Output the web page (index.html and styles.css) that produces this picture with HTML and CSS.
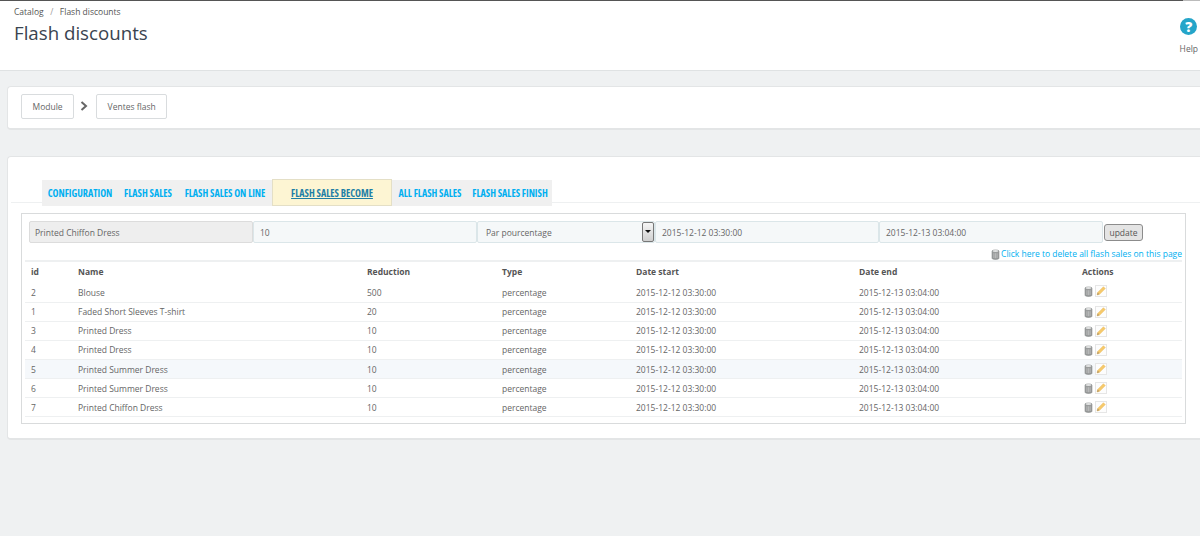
FILE: index.html
```html
<!DOCTYPE html>
<html lang="en">
<head>
<meta charset="utf-8">
<title>Flash discounts</title>
<link rel="stylesheet" href="styles.css">
</head>
<body>
<svg class="defs" width="0" height="0" aria-hidden="true">
  <symbol id="trash" viewBox="0 0 9 12">
    <path d="M.8 2.2C.8 .8 8.2 .8 8.2 2.2V10.2C8.2 11.7 .8 11.7 .8 10.2Z" fill="#9a9c9c" stroke="#7c7e7e" stroke-width=".7"/>
    <ellipse cx="4.5" cy="2.3" rx="3.2" ry="1.1" fill="#e2e3e3"/>
    <path d="M2.8 4.6V9.8M4.5 4.6V10M6.2 4.6V9.8" stroke="#c9caca" stroke-width=".7"/>
  </symbol>
  <symbol id="edit" viewBox="0 0 12 12">
    <rect x=".5" y=".5" width="11" height="11" fill="#fdfdfd" stroke="#e6e6e6"/>
    <path d="M2 10L2.7 7.4L8.4 1.7L10.3 3.6L4.6 9.3Z" fill="#f6ca6c" stroke="#e6b04a" stroke-width=".4"/>
    <path d="M2 10L2.7 7.6L4.4 9.3Z" fill="#b59a6c"/>
  </symbol>
</svg>
<div class="top-line"></div>
<header class="page-head">
  <div class="head-text">
    <div class="crumbs"><span>Catalog</span><span class="sep">/</span><span>Flash discounts</span></div>
    <h1>Flash discounts</h1>
  </div>
  <div class="help">
    <span class="help-icon">?</span>
    <span>Help</span>
  </div>
</header>
<section class="panel nav-panel">
  <a class="crumb-btn">Module</a>
  <svg class="chev" width="8" height="10" viewBox="0 0 8 10"><path d="M1.5 1L6 5L1.5 9" fill="none" stroke="#666" stroke-width="2"/></svg>
  <a class="crumb-btn">Ventes flash</a>
</section>
<section class="panel main-panel">
  <div class="tab-line">
    <nav class="tabs">
      <a class="tab t1">CONFIGURATION</a>
      <a class="tab t2">FLASH SALES</a>
      <a class="tab t3">FLASH SALES ON LINE</a>
      <a class="tab active">FLASH SALES BECOME</a>
      <a class="tab t5">ALL FLASH SALES</a>
      <a class="tab t6">FLASH SALES FINISH</a>
    </nav>
  </div>
  <div class="box">
    <form class="edit-row">
      <div class="field readonly">Printed Chiffon Dress</div>
      <div class="field">10</div>
      <div class="field select">Par pourcentage<span class="arrow"></span></div>
      <div class="field">2015-12-12 03:30:00</div>
      <div class="field">2015-12-13 03:04:00</div>
      <span class="update">update</span>
    </form>
    <div class="delete-all"><svg class="ic-trash"><use href="#trash"/></svg><a>Click here to delete all flash sales on this page</a></div>
    <table>
      <thead>
        <tr><th class="c-id">id</th><th class="c-name">Name</th><th class="c-red">Reduction</th><th class="c-type">Type</th><th class="c-start">Date start</th><th class="c-end">Date end</th><th>Actions</th></tr>
      </thead>
      <tbody>
        <tr><td>2</td><td>Blouse</td><td>500</td><td>percentage</td><td>2015-12-12 03:30:00</td><td>2015-12-13 03:04:00</td><td class="acts"><svg class="ic-trash"><use href="#trash"/></svg><svg class="ic-edit"><use href="#edit"/></svg></td></tr>
        <tr><td>1</td><td>Faded Short Sleeves T-shirt</td><td>20</td><td>percentage</td><td>2015-12-12 03:30:00</td><td>2015-12-13 03:04:00</td><td class="acts"><svg class="ic-trash"><use href="#trash"/></svg><svg class="ic-edit"><use href="#edit"/></svg></td></tr>
        <tr><td>3</td><td>Printed Dress</td><td>10</td><td>percentage</td><td>2015-12-12 03:30:00</td><td>2015-12-13 03:04:00</td><td class="acts"><svg class="ic-trash"><use href="#trash"/></svg><svg class="ic-edit"><use href="#edit"/></svg></td></tr>
        <tr><td>4</td><td>Printed Dress</td><td>10</td><td>percentage</td><td>2015-12-12 03:30:00</td><td>2015-12-13 03:04:00</td><td class="acts"><svg class="ic-trash"><use href="#trash"/></svg><svg class="ic-edit"><use href="#edit"/></svg></td></tr>
        <tr class="hl"><td>5</td><td>Printed Summer Dress</td><td>10</td><td>percentage</td><td>2015-12-12 03:30:00</td><td>2015-12-13 03:04:00</td><td class="acts"><svg class="ic-trash"><use href="#trash"/></svg><svg class="ic-edit"><use href="#edit"/></svg></td></tr>
        <tr><td>6</td><td>Printed Summer Dress</td><td>10</td><td>percentage</td><td>2015-12-12 03:30:00</td><td>2015-12-13 03:04:00</td><td class="acts"><svg class="ic-trash"><use href="#trash"/></svg><svg class="ic-edit"><use href="#edit"/></svg></td></tr>
        <tr><td>7</td><td>Printed Chiffon Dress</td><td>10</td><td>percentage</td><td>2015-12-12 03:30:00</td><td>2015-12-13 03:04:00</td><td class="acts"><svg class="ic-trash"><use href="#trash"/></svg><svg class="ic-edit"><use href="#edit"/></svg></td></tr>
      </tbody>
    </table>
  </div>
</section>
</body>
</html>
```
FILE: styles.css
```css
* { box-sizing: border-box; }
html, body { margin: 0; height: 536px; overflow: hidden; }
body {
  background: #eff1f2;
  font-family: "Open Sans", "Noto Sans", sans-serif;
  font-size: 8.5px;
  color: #666;
}
.defs { position: absolute; }
.top-line { height: 1px; background: linear-gradient(to right, #555 1183px, #bbb 1183px); }
.page-head {
  height: 70px;
  background: #fff;
  border-bottom: 1px solid #dfe2e3;
  display: flex;
  justify-content: space-between;
  padding: 0 2px 0 14px;
}
.crumbs { display: flex; gap: 6.5px; margin-top: 5px; line-height: 12px; color: #555; }
.sep { color: #999; }
h1 {
  margin: 2px 0 0;
  font-size: 18.7px;
  font-weight: 400;
  line-height: 26px;
  color: #3a4450;
}
.help { display: flex; flex-direction: column; align-items: center; margin-top: 17px; gap: 8px; line-height: 12px; color: #666; }
.help-icon {
  width: 17px;
  height: 17px;
  border-radius: 50%;
  background: #25a5c9;
  color: #fff;
  font: 800 14px/17px "Open Sans", sans-serif;
  text-align: center;
}
.panel {
  background: #fff;
  margin-left: 7px;
  border: 1px solid #e3e5e6;
  border-right: 0;
  border-bottom-width: 2px;
  border-radius: 4px 0 0 4px;
}
.nav-panel {
  margin-top: 15px;
  height: 44px;
  padding: 7px 13px;
  display: flex;
  align-items: flex-start;
}
.crumb-btn {
  height: 25px;
  padding: 0 10.5px;
  border: 1px solid #d9dcde;
  border-radius: 2px;
  line-height: 23px;
  color: #666;
}
.chev { margin: 7px 8px 0 6px; }
.main-panel {
  margin-top: 26px;
  height: 284px;
  padding: 23px 0 0 3px;
}
.tab-line {
  height: 23px;
  border-bottom: 1px solid #eef0f1;
  padding-left: 31px;
}
.tabs {
  display: flex;
  height: 26px;
  width: 510px;
  background: #f0f0f0;
}
.tab {
  font-family: "Open Sans", sans-serif;
  font-stretch: 75%;
  font-size: 10px;
  font-weight: 700;
  color: #00aff0;
  line-height: 26px;
  text-align: center;
  white-space: nowrap;
}
.t1 { width: 76px; }
.t2 { width: 60px; }
.t3 { width: 94px; }
.t5 { width: 76px; }
.t6 { width: 84px; }
.tab.active {
  width: 120px;
  height: 27px;
  margin-top: -1px;
  background: #fdf5d3;
  border: 1px solid #e4dfc6;
  color: #1e7fa6;
  text-decoration: underline;
}
.box {
  margin: 10px 0 0 10px;
  height: 211px;
  width: 1165px;
  border: 1px solid #d9dbdc;
  padding: 7px 3px 0;
}
.edit-row { display: flex; align-items: center; padding-left: 4px; }
.field {
  position: relative;
  width: 224px;
  height: 22px;
  padding: 0 6px;
  line-height: 21px;
  background: #f5f8f9;
  border: 1px solid #dbe6e9;
  border-radius: 2px;
  color: #666;
}
.field.readonly { background: #eee; border-color: #dcdcdc; padding-left: 5px; }
.field.select { width: 178px; padding-left: 8px; }
.arrow {
  position: absolute;
  right: 0;
  top: 0;
  width: 12px;
  height: 20px;
  background: linear-gradient(#f6f6f6, #cfcfcf);
  border: 1px solid #777;
  border-radius: 2px;
}
.arrow::after {
  content: "";
  position: absolute;
  left: 2px;
  top: 7px;
  border: 3px solid transparent;
  border-top: 3px solid #111;
}
.update {
  margin-left: 1px;
  width: 39px;
  height: 17px;
  line-height: 15px;
  text-align: center;
  background: #e4e4e4;
  border: 1px solid #8c8c8c;
  border-radius: 3px;
  color: #555;
}
.delete-all {
  display: flex;
  justify-content: flex-end;
  align-items: center;
  height: 12px;
  margin-top: 5px;
  color: #00aff0;
  line-height: 12px;
}
.delete-all a { margin-left: 1px; }
.ic-trash { width: 9px; height: 11px; vertical-align: top; margin-top: 1px; }
.ic-edit { width: 12px; height: 12px; margin-left: 2px; vertical-align: top; }
table {
  width: 100%;
  border-collapse: collapse;
  table-layout: fixed;
  border-top: 2px solid #eef0f1;
}
th {
  height: 21px;
  padding: 0 0 2px 6px;
  text-align: left;
  font-weight: 700;
  color: #555;
}
td {
  height: 19.17px;
  padding: 0 0 0 6px;
  border-bottom: 1px solid #eef0f1;
  color: #666;
  white-space: nowrap;
}
tbody tr:first-child td { height: 20px; padding-top: 1px; }
.hl td { background: #f5f8fb; }
td.acts, tbody tr:first-child td.acts { padding: 3px 0 0 8px; vertical-align: top; line-height: 12px; }
.c-id { width: 47px; }
.c-name { width: 289px; }
.c-red { width: 135px; }
.c-type { width: 134px; }
.c-start { width: 223px; }
.c-end { width: 223px; }
```
